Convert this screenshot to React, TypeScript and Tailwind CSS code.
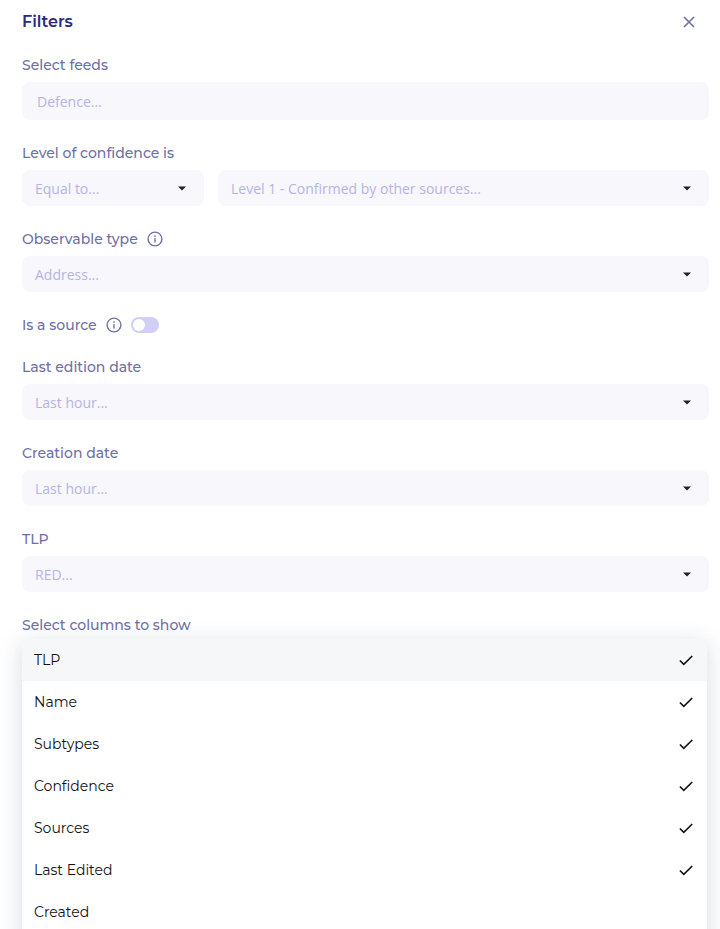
import React from "react";

const field = "flex items-center justify-between rounded-lg bg-[#f7f7fc] pr-[18px] font-['Open_Sans',sans-serif] text-sm text-[#b5b4e6]";
const label = "flex h-6 items-center text-sm font-medium text-[#6e6fa6]";

function Caret() {
  return (
    <svg width="8" height="4" viewBox="0 0 8 4" className="block overflow-visible"><path d="M0 .4h8L4 4.4z" fill="#202026" /></svg>
  );
}

function Info() {
  return (
    <svg width="16" height="16" viewBox="0 0 16 16" fill="none" stroke="#6e6fa6" strokeWidth="1.4">
      <circle cx="8" cy="8" r="6.9" /><path d="M8 7.2v4.3M8 4.3v1.5" />
    </svg>
  );
}

function Select({ text, className = "" }: { text: string; className?: string }) {
  return <div className={`${field} h-9 pl-[13px] ${className}`}><span className="pt-px">{text}</span><Caret /></div>;
}

function Group({ title, value }: { title: string; value: string }) {
  return (
    <div className="h-[86px]">
      <div className={label}>{title}</div>
      <Select text={value} className="mt-[5px]" />
    </div>
  );
}

const columns = [
  { name: "TLP", on: true }, { name: "Name", on: true }, { name: "Subtypes", on: true },
  { name: "Confidence", on: true }, { name: "Sources", on: true }, { name: "Last Edited", on: true },
  { name: "Created", on: false },
];

export default function App() {
  return (
    <div className="h-[929px] w-[720px] overflow-hidden bg-white pl-[22px] pr-[11px] font-[Montserrat,'Open_Sans',sans-serif] [font-variant-ligatures:none]">
      <div className="flex h-[53px] justify-between pt-[9px]">
        <h1 className="h-6 pt-px text-base font-semibold leading-6 text-[#292b80]">Filters</h1>
        <svg className="mr-[14px] mt-[7px]" width="12" height="12" viewBox="0 0 12 12" stroke="#6e6fa6" strokeWidth="1.6"><path d="M1 1l10 10M11 1L1 11" /></svg>
      </div>
      <div className="h-[88px]">
        <div className={label}>Select feeds</div>
        <div className={`${field} mt-[5px] h-[38px] pl-[15px]`}><span className="pt-px">Defence...</span></div>
      </div>
      <div className="h-[86px]">
        <div className={label}>Level of confidence is</div>
        <div className="mt-[5px] flex gap-[14px]">
          <Select text="Equal to..." className="w-[182px]" />
          <Select text="Level 1 - Confirmed by other sources..." className="flex-1" />
        </div>
      </div>
      <div className="h-[86px]">
        <div className={`${label} gap-[9px]`}>Observable type <Info /></div>
        <Select text="Address..." className="mt-[5px]" />
      </div>
      <div className={`${label} mb-[18px] gap-[9px]`}>
        Is a source <Info />
        <span className="flex h-4 w-7 items-center rounded-full bg-[#d0d0f7] pl-[2px]"><span className="h-3 w-3 rounded-full bg-white" /></span>
      </div>
      <Group title="Last edition date" value="Last hour..." />
      <Group title="Creation date" value="Last hour..." />
      <Group title="TLP" value="RED..." />
      <div className={label}>Select columns to show</div>
      <div className="mr-[2px] mt-[2px] h-[320px] bg-white text-sm text-[#111111] shadow-[0_5px_22px_rgba(30,40,80,0.17)]">
        {columns.map((c, i) => (
          <div key={c.name} className={`flex h-[42px] items-center justify-between pl-3 pr-[14px] ${i === 0 ? "bg-[#f6f7f9]" : ""}`}>
            {c.name}
            {c.on && <svg width="14" height="11" viewBox="0 0 14 11" fill="none" stroke="#111111" strokeWidth="1.6"><path d="M.9 5.5l3.9 3.9L13.2 1" /></svg>}
          </div>
        ))}
      </div>
    </div>
  );
}
